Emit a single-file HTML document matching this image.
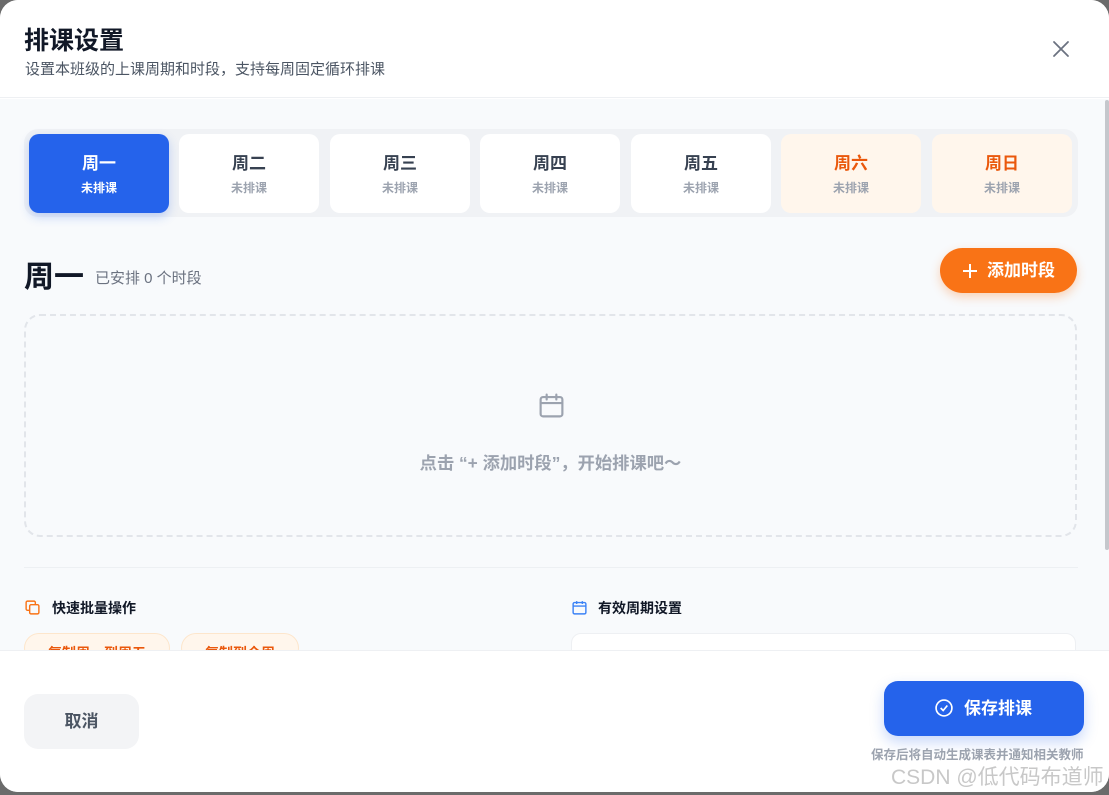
<!DOCTYPE html>
<html><head><meta charset="utf-8"><style>
*{box-sizing:border-box;margin:0;padding:0}
body{width:1109px;height:795px;background:#6b6b6b;font-family:"Liberation Sans","Noto Sans CJK SC",sans-serif;position:relative;overflow:hidden}
.dlg{position:absolute;left:0;top:0;width:1109px;height:792px;background:#fff;border-radius:18px;overflow:hidden}
.hd{position:absolute;left:0;top:0;width:100%;height:98px;background:#fff;border-bottom:1px solid #eef0f3}
.hd h1{position:absolute;left:24px;top:21px;font-size:25px;font-weight:700;color:#111827}
.hd p{position:absolute;left:25px;top:58px;font-size:15px;color:#4b5563}
.x{position:absolute;left:1052px;top:40px;width:18px;height:18px}
.body{position:absolute;left:0;top:99px;width:1109px;height:551px;background:#f8fafc}
.sb{position:absolute;right:0;top:100px;width:4px;height:450px;background:#c5c7cc;border-radius:2px}
.tabs{position:absolute;left:24px;top:129px;width:1054px;height:88px;background:#f0f2f5;border-radius:14px}
.t{position:absolute;top:5px;width:140px;height:79px;background:#fff;border-radius:10px;text-align:center}
.t b{display:block;margin-top:15px;font-size:17px;color:#374151}
.t span{display:block;margin-top:5px;font-size:12px;color:#9ca3af;font-weight:700}
.t.a{background:#2563eb;box-shadow:0 4px 10px rgba(37,99,235,.25)}
.t.a b,.t.a span{color:#fff}
.t.w{background:#fff6ec}.t.w b{color:#ea580c}
.day{position:absolute;left:24px;top:252px;font-size:30px;font-weight:700;color:#111827}
.cnt{position:absolute;left:95px;top:267px;font-size:15px;color:#6b7280}
.add{position:absolute;left:940px;top:248px;width:137px;height:45px;background:#f97316;border-radius:23px;color:#fff;font-size:17px;font-weight:700;line-height:45px;padding-left:47px;box-shadow:0 4px 10px rgba(249,115,22,.3)}
.add:before{content:"";position:absolute;left:23px;top:22px;width:14px;height:2px;background:#fff}
.add:after{content:"";position:absolute;left:29px;top:16px;width:2px;height:14px;background:#fff}
.empty{position:absolute;left:24px;top:314px;width:1053px;height:223px;border:2px dashed #e2e5ea;border-radius:16px}
.empty p{position:absolute;left:0;width:100%;top:133px;text-align:center;font-size:17.3px;font-weight:700;color:#9ca3af}
.hr{position:absolute;left:24px;top:567px;width:1054px;height:1px;background:#edf0f3}
.sec{position:absolute;top:598px;font-size:14px;font-weight:700;color:#111827}
.chip{position:absolute;top:633px;height:30px;border:1px solid #fde6cc;background:#fff6ec;border-radius:15px;color:#ea580c;font-size:14px;font-weight:700;padding:9px 23px}
.card{position:absolute;left:571px;top:633px;width:505px;height:40px;background:#fff;border:1px solid #eef0f3;border-radius:10px}
.ft{position:absolute;left:0;top:650px;width:1109px;height:150px;background:#fff;border-top:1px solid #eef0f3}
.cancel{position:absolute;left:24px;top:694px;width:115px;height:55px;background:#f3f4f6;border-radius:14px;text-align:center;line-height:55px;font-size:17px;font-weight:700;color:#4b5563}
.save{position:absolute;left:884px;top:681px;width:200px;height:55px;background:#2563eb;border-radius:14px;color:#fff;font-size:17px;font-weight:700;line-height:55px;padding-left:80px;box-shadow:0 6px 14px rgba(37,99,235,.25)}
.note{position:absolute;left:871px;top:744px;font-size:12.5px;color:#9ca3af;font-weight:700}
.wm{position:absolute;left:891px;top:761px;font-size:21px;color:#c8c8c8}
</style></head><body>
<div class="dlg">
<div class="hd"><h1>排课设置</h1><p>设置本班级的上课周期和时段，支持每周固定循环排课</p>
<svg class="x" viewBox="0 0 18 18" stroke="#6b7280" stroke-width="1.8" stroke-linecap="round"><path d="M2 2L16 16M16 2L2 16"/></svg></div>
<div class="body"></div>
<div class="sb"></div>
<div class="tabs">
<div class="t a" style="left:5px"><b>周一</b><span>未排课</span></div>
<div class="t" style="left:155px"><b>周二</b><span>未排课</span></div>
<div class="t" style="left:306px"><b>周三</b><span>未排课</span></div>
<div class="t" style="left:456px"><b>周四</b><span>未排课</span></div>
<div class="t" style="left:607px"><b>周五</b><span>未排课</span></div>
<div class="t w" style="left:757px"><b>周六</b><span>未排课</span></div>
<div class="t w" style="left:908px"><b>周日</b><span>未排课</span></div>
</div>
<div class="day">周一</div><div class="cnt">已安排 0 个时段</div>
<div class="add">添加时段</div>
<div class="empty">
<svg style="position:absolute;left:511px;top:75px" width="29" height="29" viewBox="0 0 24 24" fill="none" stroke="#9ca3af" stroke-width="1.8" stroke-linecap="round"><rect x="3" y="5" width="18" height="16" rx="2"/><path d="M3 10h18M8 3v4M16 3v4"/></svg>
<p>点击 “+ 添加时段”，开始排课吧～</p></div>
<div class="hr"></div>
<svg style="position:absolute;left:24px;top:599px" width="17" height="17" viewBox="0 0 24 24" fill="none" stroke="#f97316" stroke-width="2"><rect x="8" y="8" width="13" height="13" rx="2"/><path d="M16 8V5a2 2 0 0 0-2-2H5a2 2 0 0 0-2 2v9a2 2 0 0 0 2 2h3"/></svg>
<div class="sec" style="left:52px">快速批量操作</div>
<svg style="position:absolute;left:571px;top:599px" width="17" height="17" viewBox="0 0 24 24" fill="none" stroke="#3b82f6" stroke-width="2"><rect x="3" y="5" width="18" height="16" rx="2"/><path d="M3 10h18M8 3v4M16 3v4"/></svg>
<div class="sec" style="left:598px">有效周期设置</div>
<div class="chip" style="left:24px">复制周一到周五</div>
<div class="chip" style="left:181px">复制到全周</div>
<div class="card"></div>
<div class="ft"></div>
<div class="cancel">取消</div>
<div class="save"><svg style="position:absolute;left:50px;top:17px" width="20" height="20" viewBox="0 0 24 24" fill="none" stroke="#fff" stroke-width="2"><circle cx="12" cy="12" r="9.5"/><path d="M8 12l3 3 5-6"/></svg>保存排课</div>
<div class="note">保存后将自动生成课表并通知相关教师</div>
<div class="wm">CSDN @低代码布道师</div>
</div>
</body></html>
